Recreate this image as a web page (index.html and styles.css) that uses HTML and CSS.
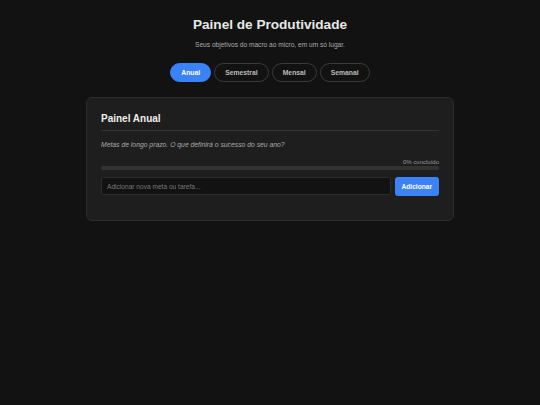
FILE: index.html
```html
<!DOCTYPE html>
<html lang="pt-BR">
<head>
    <meta charset="UTF-8">
    <meta name="viewport" content="width=device-width, initial-scale=1.0">
    <title>Painel de Produtividade</title>
    <link rel="stylesheet" href="styles.css">
</head>
<body>
    <header class="top">
        <h1>Painel de Produtividade</h1>
        <p class="subtitle">Seus objetivos do macro ao micro, em um só lugar.</p>
    </header>

    <!-- Abas de período -->
    <nav class="tabs">
        <button class="tab active">Anual</button>
        <button class="tab">Semestral</button>
        <button class="tab">Mensal</button>
        <button class="tab">Semanal</button>
    </nav>

    <section class="panel">
        <h2>Painel Anual</h2>
        <p class="panel-desc">Metas de longo prazo. O que definirá o sucesso do seu ano?</p>

        <div class="progress-label">0% concluído</div>
        <div class="progress"><div class="progress-fill" style="width: 0%"></div></div>

        <form class="add-form">
            <input type="text" placeholder="Adicionar nova meta ou tarefa...">
            <button type="button" class="add-btn">Adicionar</button>
        </form>

        <ul class="task-list"></ul>
    </section>
</body>
</html>
```

FILE: styles.css
```css
body {
    margin: 0;
    font-family: 'Liberation Sans', Arial, sans-serif;
    background: #121212;
    color: #e0e0e0;
}
.top {
    text-align: center;
    padding-top: 17px;
}
.top h1 {
    margin: 0;
    font-size: 13.6px;
    font-weight: bold;
    color: #e8e8e8;
}
.subtitle {
    margin: 9px 0 0;
    font-size: 6.6px;
    color: #aaa;
}
.tabs {
    display: flex;
    justify-content: center;
    gap: 3px;
    margin-top: 15px;
}
.tab {
    height: 19px;
    padding: 0 10px;
    border: 1px solid #3a3a3a;
    border-radius: 10px;
    background: transparent;
    color: #bbb;
    font-family: inherit;
    font-size: 6.8px;
    font-weight: bold;
}
.tab.active {
    background: #3b82f6;
    border-color: #3b82f6;
    color: #fff;
}
.panel {
    width: 338px;
    margin: 15px auto 0;
    padding: 15px 14px 24px;
    background: #1e1e1e;
    border: 1px solid #2c2c2c;
    border-radius: 6px;
}
.panel h2 {
    margin: 0;
    padding-bottom: 6px;
    font-size: 10px;
    color: #eee;
    border-bottom: 1px solid #333;
}
.panel-desc {
    margin: 10px 0 0;
    font-size: 6.8px;
    font-style: italic;
    color: #aaa;
}
.progress-label {
    margin-top: 11px;
    text-align: right;
    font-size: 6px;
    color: #999;
}
.progress {
    height: 4px;
    margin-top: 1px;
    background: #333;
    border-radius: 2px;
}
.progress-fill {
    height: 100%;
    background: #3b82f6;
    border-radius: 2px;
}
.add-form {
    display: flex;
    gap: 4px;
    margin-top: 7px;
}
.add-form input {
    flex: 1;
    height: 18px;
    box-sizing: border-box;
    padding: 0 5px;
    background: #121212;
    border: 1px solid #2c2c2c;
    border-radius: 3px;
    color: #ddd;
    font-family: inherit;
    font-size: 6.6px;
}
.add-form input::placeholder {
    color: #777;
}
.add-btn {
    height: 19px;
    padding: 0 7px;
    border: none;
    border-radius: 3px;
    background: #3b82f6;
    color: #fff;
    font-family: inherit;
    font-size: 6.6px;
    font-weight: bold;
}
.task-list {
    margin: 0;
    padding: 0;
    list-style: none;
}
```
